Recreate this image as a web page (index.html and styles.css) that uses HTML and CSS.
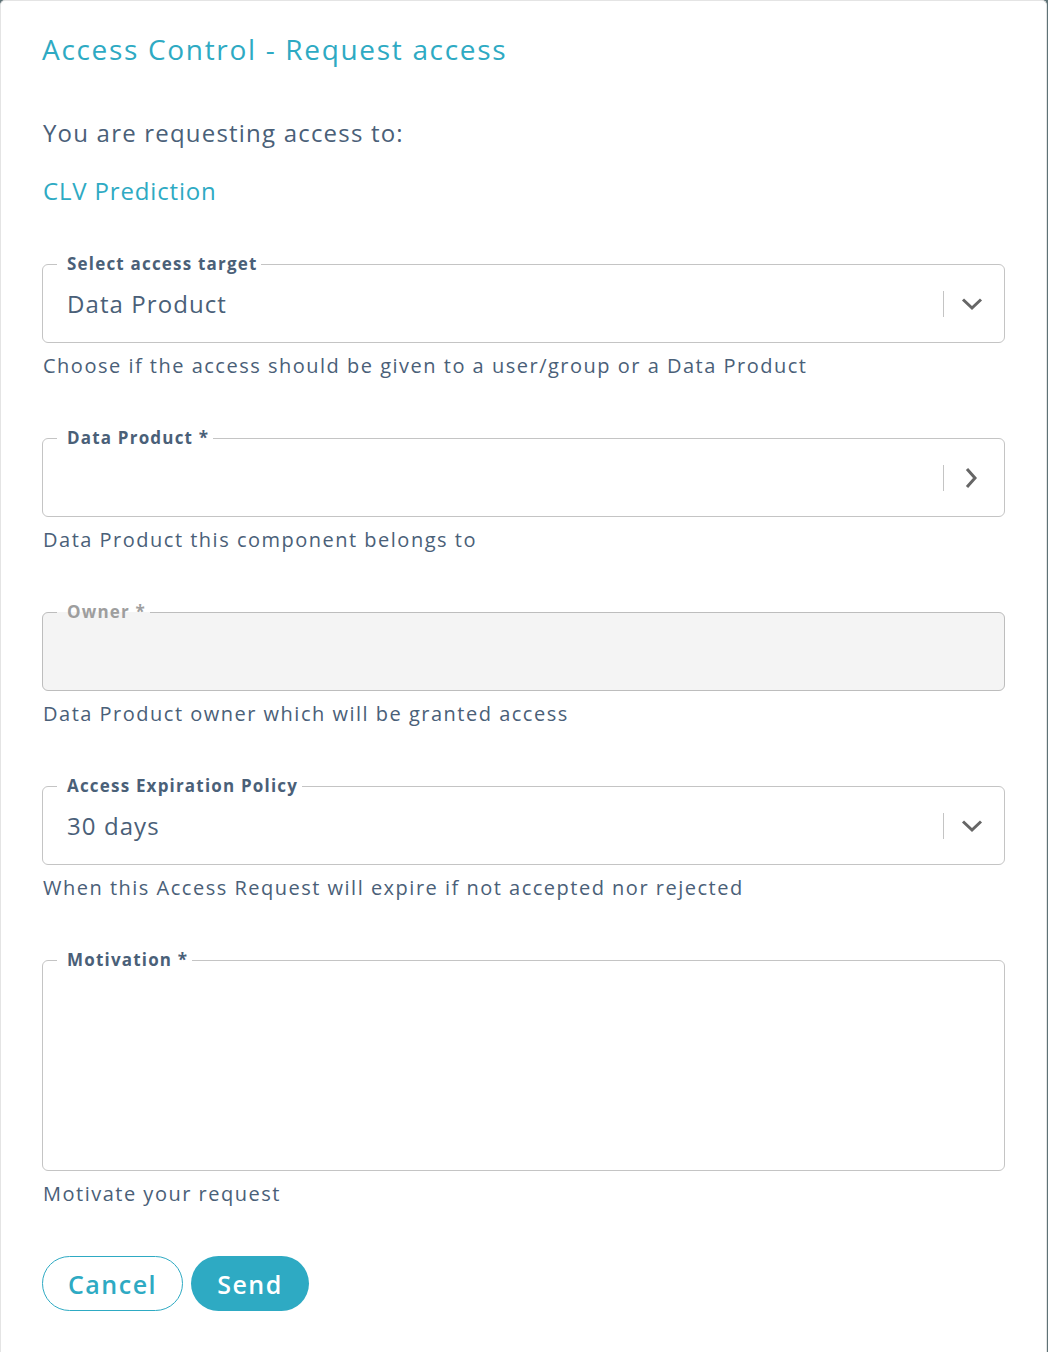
FILE: index.html
```html
<!DOCTYPE html>
<html lang="en">
<head>
<meta charset="utf-8">
<title>Access Control - Request access</title>
<link rel="stylesheet" href="styles.css">
</head>
<body>
<div class="modal">
  <h1 class="title">Access Control - Request access</h1>
  <p class="intro">You are requesting access to:</p>
  <p class="target">CLV Prediction</p>

  <div class="group">
    <fieldset class="field">
      <legend>Select access target</legend>
      <div class="control">
        <span class="value">Data Product</span>
        <span class="sep"></span>
        <svg class="chev" width="22" height="14" viewBox="0 0 22 14"><path d="M2 2.5 L11 11 L20 2.5" fill="none" stroke="#666" stroke-width="3"/></svg>
      </div>
    </fieldset>
    <p class="helper">Choose if the access should be given to a user/group or a Data Product</p>
  </div>

  <div class="group">
    <fieldset class="field">
      <legend>Data Product *</legend>
      <div class="control">
        <span class="value"></span>
        <span class="sep"></span>
        <svg class="chev" width="22" height="22" viewBox="0 0 22 22"><path d="M6 2 L14 11 L6 20" fill="none" stroke="#666" stroke-width="3"/></svg>
      </div>
    </fieldset>
    <p class="helper">Data Product this component belongs to</p>
  </div>

  <div class="group">
    <fieldset class="field disabled">
      <legend>Owner *</legend>
      <div class="control"></div>
    </fieldset>
    <p class="helper">Data Product owner which will be granted access</p>
  </div>

  <div class="group">
    <fieldset class="field">
      <legend>Access Expiration Policy</legend>
      <div class="control">
        <span class="value">30 days</span>
        <span class="sep"></span>
        <svg class="chev" width="22" height="14" viewBox="0 0 22 14"><path d="M2 2.5 L11 11 L20 2.5" fill="none" stroke="#666" stroke-width="3"/></svg>
      </div>
    </fieldset>
    <p class="helper">When this Access Request will expire if not accepted nor rejected</p>
  </div>

  <div class="group">
    <fieldset class="field">
      <legend>Motivation *</legend>
      <div class="control textarea"></div>
    </fieldset>
    <p class="helper">Motivate your request</p>
  </div>

  <div class="actions">
    <button class="btn btn-outline">Cancel</button>
    <button class="btn btn-fill">Send</button>
  </div>
</div>
</body>
</html>
```

FILE: styles.css
```css
html, body {
  margin: 0;
  padding: 0;
  background: #5e7276;
  height: 100%;
}
body {
  font-family: "Open Sans", "Liberation Sans", sans-serif;
  color: #4a6078;
}
.modal {
  box-sizing: border-box;
  width: 1047px;
  min-height: 1352px;
  background: #fff;
  border: 1px solid #e4e4e4;
  border-bottom: none;
  border-radius: 5px 5px 0 0;
  padding: 30px 41px 40px 41px;
}
.title {
  margin: 0;
  font-size: 28px;
  font-weight: 500;
  line-height: 36px;
  letter-spacing: 0.06em;
  color: #2eaac3;
}
.intro {
  margin: 51px 0 0 1px;
  font-size: 24px;
  line-height: 30px;
  letter-spacing: 0.05em;
  color: #4a6078;
}
.target {
  margin: 28px 0 0 1px;
  font-size: 24px;
  line-height: 30px;
  letter-spacing: 0.035em;
  color: #2eaac3;
}
.group {
  margin-top: 48px;
}
.group + .group {
  margin-top: 48px;
}
.field {
  margin: 0;
  padding: 0;
  min-width: 0;
  border: 1px solid #c4c4c4;
  border-radius: 6px;
}
.field legend {
  margin-left: 14px;
  padding: 0 4px 0 10px;
  font-size: 17px;
  line-height: 20px;
  font-weight: 700;
  letter-spacing: 0.07em;
  color: #4a6078;
}
.control {
  display: flex;
  align-items: center;
  height: 59px;
  padding: 0 21px 9px 24px;
}
.value {
  flex: 1;
  font-size: 24px;
  letter-spacing: 0.045em;
  color: #4a6078;
}
.sep {
  width: 1px;
  height: 26px;
  background: #c4c4c4;
  margin-right: 17px;
}
.chev {
  display: block;
}
.field.disabled {
  background: #f4f4f4;
  border-color: #bdbdbd;
}
.field.disabled legend {
  color: #9e9e9e;
}
.control.textarea {
  height: 191px;
}
.helper {
  margin: 9px 0 0 1px;
  font-size: 20px;
  line-height: 28px;
  letter-spacing: 0.075em;
  color: #4a6078;
}
.actions {
  display: flex;
  gap: 8px;
  margin-top: 48px;
}
.btn {
  box-sizing: border-box;
  height: 55px;
  border-radius: 28px;
  font-family: inherit;
  font-size: 25px;
  font-weight: 600;
  letter-spacing: 0.06em;
  cursor: pointer;
}
.btn-outline {
  width: 141px;
  background: #fff;
  border: 1px solid #2eaac3;
  color: #2eaac3;
}
.btn-fill {
  width: 118px;
  background: #2eaac3;
  border: none;
  color: #fff;
}
```
